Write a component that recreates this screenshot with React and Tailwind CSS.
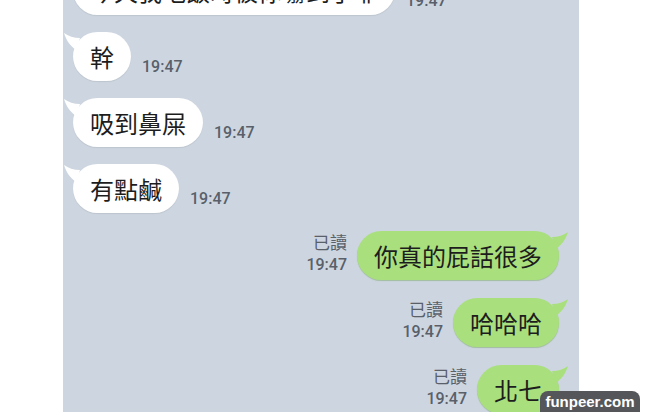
import React from "react";

const cjk = { fontFamily: '"Noto Sans CJK TC", "Noto Sans", sans-serif' };
const num = { fontFamily: 'Roboto, "Noto Sans CJK TC", sans-serif' };

function LeftTail() {
  return (
    <svg className="absolute left-[-9px] top-[1px]" width="16" height="18" viewBox="0 0 16 18">
      <path d="M16 5 C10 5 4 3 0 0 C2 6 5 12 12 17 Z" fill="#ffffff" />
    </svg>
  );
}

function RightTail() {
  return (
    <svg className="absolute right-[-9px] top-[1px]" width="16" height="18" viewBox="0 0 16 18">
      <path d="M0 5 C6 5 12 3 16 0 C14 6 11 12 4 17 Z" fill="#a9e07d" />
    </svg>
  );
}

function Left({ text, first, time = "19:47", tail = true }) {
  return (
    <div className={`flex items-end gap-[11px] ${first ? "mt-[-34px]" : ""}`}>
      <div className="relative h-[49px] rounded-[25px] bg-white px-[17px] flex items-center shadow-[0_1px_1px_rgba(0,0,0,0.08)]">
        {tail && <LeftTail />}
        <span className="text-[24px] leading-none text-[#1d1d1d] whitespace-nowrap" style={cjk}>{text}</span>
      </div>
      <span className="text-[16px] leading-none font-medium text-[#59606a] pb-[6px]" style={num}>{time}</span>
    </div>
  );
}

function Right({ text }) {
  return (
    <div className="flex items-end justify-end gap-[10px]">
      <div className="flex flex-col items-end pb-[4px] text-[#59606a]">
        <span className="text-[17px] leading-[24px]" style={cjk}>已讀</span>
        <span className="text-[16px] leading-[22px] font-medium" style={num}>19:47</span>
      </div>
      <div className="relative h-[49px] rounded-[25px] bg-[#a9e07d] px-[17px] flex items-center shadow-[0_1px_1px_rgba(80,140,40,0.35)]">
        <RightTail />
        <span className="text-[24px] leading-none text-[#1d1d1d] whitespace-nowrap" style={cjk}>{text}</span>
      </div>
    </div>
  );
}

export default function App() {
  return (
    <div className="relative w-[660px] h-[412px] bg-white overflow-hidden">
      <div className="ml-[63px] w-[516px] h-full bg-[#cdd6e0] overflow-hidden flex flex-col gap-[17px] pl-[10px] pr-[20px]">
        <Left text="今天我吃飯時被你嚇到了耶" first tail={false} />
        <Left text="幹" />
        <Left text="吸到鼻屎" />
        <Left text="有點鹹" />
        <Right text="你真的屁話很多" />
        <Right text="哈哈哈" />
        <Right text="北七" />
      </div>
      <div className="absolute left-[540px] top-[391px] w-[100px] h-[21px] rounded-t-[8px] bg-[#555659] flex items-center justify-center">
        <span className="text-[15px] font-bold text-white leading-none" style={{ fontFamily: '"Liberation Sans", Arial, sans-serif' }}>funpeer.com</span>
      </div>
    </div>
  );
}
